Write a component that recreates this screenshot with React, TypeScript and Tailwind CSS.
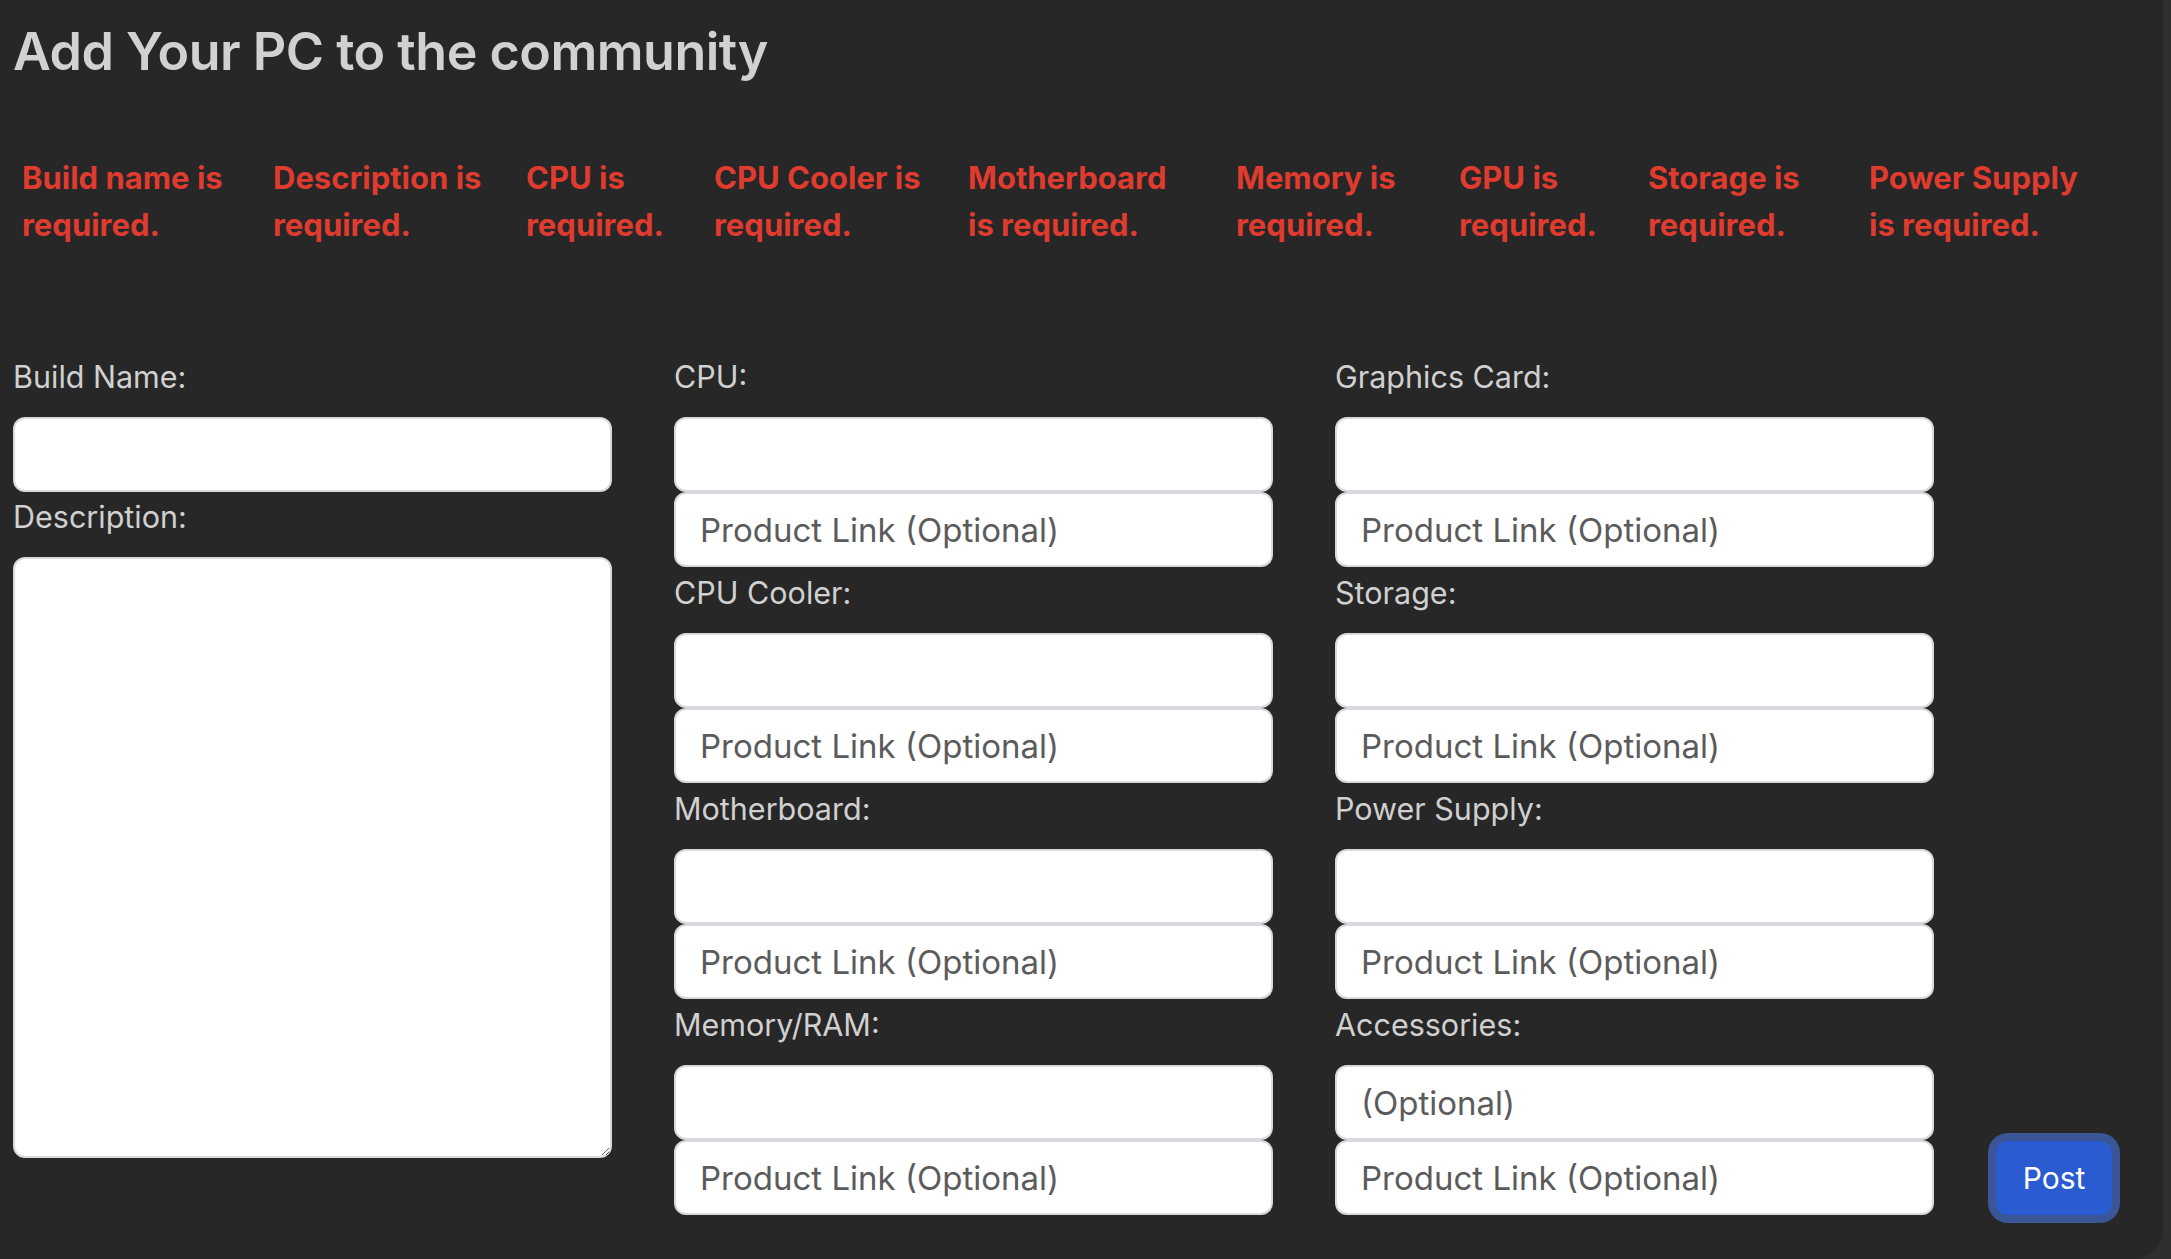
import React from 'react';

const errors: { lines: [string, string]; width: number }[] = [
  { lines: ['Build name is', 'required.'], width: 251 },
  { lines: ['Description is', 'required.'], width: 253 },
  { lines: ['CPU is', 'required.'], width: 188 },
  { lines: ['CPU Cooler is', 'required.'], width: 254 },
  { lines: ['Motherboard', 'is required.'], width: 268 },
  { lines: ['Memory is', 'required.'], width: 223 },
  { lines: ['GPU is', 'required.'], width: 189 },
  { lines: ['Storage is', 'required.'], width: 221 },
  { lines: ['Power Supply', 'is required.'], width: 260 },
];

const middle = ['CPU:', 'CPU Cooler:', 'Motherboard:', 'Memory/RAM:'];
const right = ['Graphics Card:', 'Storage:', 'Power Supply:', 'Accessories:'];

const font = { fontFamily: 'Inter, "Liberation Sans", sans-serif' };

function Label({ children }: { children: React.ReactNode }) {
  return (
    <div className="h-[66px] pt-[8px] text-[30.5px] leading-[35px] text-[#d0d0d0]">{children}</div>
  );
}

function Field({ placeholder }: { placeholder?: string }) {
  return (
    <input
      className="block h-[75px] w-full rounded-[12px] border-2 border-[#d9dadd] bg-white px-[24px] text-[33px] text-[#333] placeholder:text-[#5b5b5b] outline-none"
      placeholder={placeholder}
      style={font}
    />
  );
}

function PartGroup({ label, optional }: { label: string; optional?: boolean }) {
  return (
    <div>
      <Label>{label}</Label>
      <Field placeholder={optional ? '(Optional)' : undefined} />
      <Field placeholder="Product Link (Optional)" />
    </div>
  );
}

export default function App() {
  return (
    <div className="min-h-[1259px] w-full bg-[#2f2f2f]" style={font}>
      <div className="min-h-[1259px] w-[2163px] rounded-br-[30px] bg-[#272727] pl-[13px]">
        <h1 className="pt-[19px] text-[52px] font-semibold leading-[65px] tracking-[-0.5px] text-[#d1d1d1]">
          Add Your PC to the community
        </h1>

        <div className="mt-[70px] flex pl-[9px]">
          {errors.map((e, i) => (
            <div
              key={i}
              className="shrink-0 text-[31px] font-bold leading-[47px] text-[#df3b2f]"
              style={{ width: e.width }}
            >
              <span className="block whitespace-nowrap">{e.lines[0]}</span>
              <span className="block whitespace-nowrap">{e.lines[1]}</span>
            </div>
          ))}
        </div>

        <div className="mt-[103px] flex items-end gap-[62px]">
          <div className="w-[599px] self-start">
            <Label>Build Name:</Label>
            <Field />
            <div className="h-[65px] pt-[7px] text-[30.5px] leading-[35px] text-[#d0d0d0]">Description:</div>
            <textarea
              className="block h-[601px] w-full rounded-[12px] border-2 border-[#d9dadd] bg-white p-[20px] text-[32px] outline-none"
              style={font}
            />
          </div>

          <div className="w-[599px]">
            {middle.map((m) => (
              <PartGroup key={m} label={m} />
            ))}
          </div>

          <div className="w-[599px]">
            {right.map((m) => (
              <PartGroup key={m} label={m} optional={m === 'Accessories:'} />
            ))}
          </div>

          <button className="h-[74px] w-[116px] rounded-[12px] bg-[#2a5bd1] text-[30px] text-white ring-[8px] ring-[#3a5696]">
            Post
          </button>
        </div>
      </div>
    </div>
  );
}
